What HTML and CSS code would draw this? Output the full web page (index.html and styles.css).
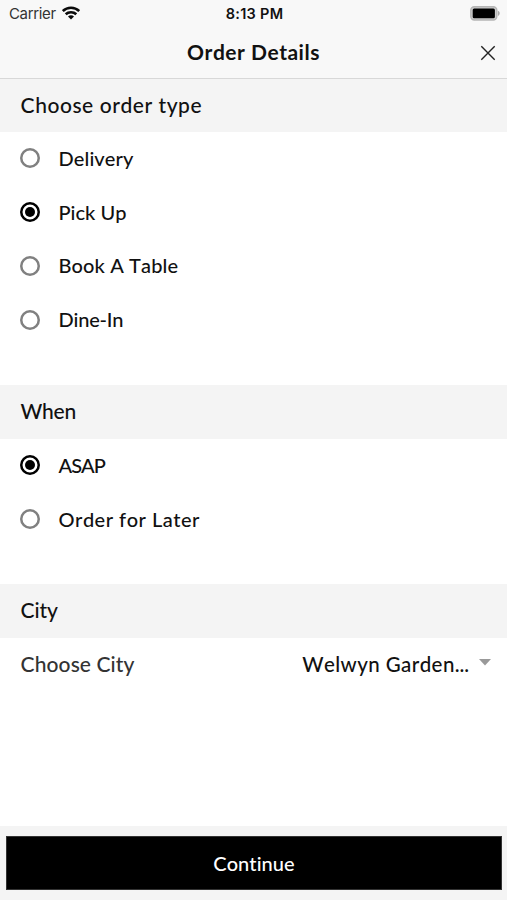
FILE: index.html
```html
<!DOCTYPE html>
<html lang="en">
<head>
<meta charset="utf-8">
<title>Order Details</title>
<link rel="stylesheet" href="styles.css">
</head>
<body>
<div class="screen">
  <header class="header">
    <div class="status">
      <div class="carrier"><span>Carrier</span>
        <svg class="wifi" width="18" height="14" viewBox="0 0 18 14"><g fill="none" stroke="#0b0b0b" stroke-width="2.6"><path d="M.8 5.100C5.300 .7 12.700 .7 17.200 5.100"/><path d="M3.700 8.300C6.600 5.500 11.400 5.500 14.300 8.300"/></g><path fill="#0b0b0b" d="M6 10.500C7.700 8.900 10.300 8.900 12 10.500L9 13.500Z"/></svg>
      </div>
      <span class="time">8:13 PM</span>
      <svg class="battery" width="32" height="15" viewBox="0 0 32 15"><rect x="1.800" y=".8" width="26" height="13.200" rx="3.500" fill="#ccc" stroke="#b5b5b5" stroke-width="1.400"/><rect x="3.700" y="2.500" width="22.200" height="9.800" rx="1.500"/><path d="M28.900 4.800C31.300 5.800 31.300 9 28.900 10Z" fill="#aaa"/></svg>
    </div>
    <div class="nav">
      <h1 class="title">Order Details</h1>
      <svg class="close" width="16" height="16" viewBox="0 0 16 16"><path d="M1.300 1.300L14.700 14.700M14.700 1.300L1.300 14.700" stroke="#222" stroke-width="1.400" fill="none"/></svg>
    </div>
  </header>
  <main class="content">
    <h2 class="section type-head"><span class="t-type">Choose order type</span></h2>
    <div class="options">
      <div class="option"><i class="radio"></i><span class="t-delivery">Delivery</span></div>
      <div class="option"><i class="radio on"></i><span class="t-pickup">Pick Up</span></div>
      <div class="option"><i class="radio"></i><span class="t-table">Book A Table</span></div>
      <div class="option"><i class="radio"></i><span class="t-dine">Dine-In</span></div>
    </div>
    <h2 class="section"><span class="t-when">When</span></h2>
    <div class="options later">
      <div class="option"><i class="radio on"></i><span class="t-asap">ASAP</span></div>
      <div class="option"><i class="radio"></i><span class="t-later">Order for Later</span></div>
    </div>
    <h2 class="section"><span class="t-city">City</span></h2>
    <div class="city">
      <span class="t-choose">Choose City</span>
      <span class="value">Welwyn Garden<span class="dots">...</span></span>
      <svg class="caret" width="12" height="7" viewBox="0 0 12 7"><path d="M0 0H12L6 6.500Z" fill="#999"/></svg>
    </div>
  </main>
  <footer class="footer"><button class="continue">Continue</button></footer>
</div>
</body>
</html>
```
FILE: styles.css
```css
* { box-sizing: border-box; }
body { margin: 0; background: #fff; color: #111; font: 500 20px/24px Lato, "Open Sans", sans-serif; font-kerning: none; font-variant-ligatures: none; }
.screen { width: 507px; height: 900px; display: flex; flex-direction: column; }
.header { height: 79px; background: #f8f8f8; border-bottom: 1px solid #d8d8d8; }
.status { height: 27px; padding: 0 7px 0 9px; display: grid; grid-template-columns: 1fr auto 1fr; align-items: center; font: 15px/27px Inter, sans-serif; }
.carrier { display: flex; align-items: center; gap: 6px; color: #333; letter-spacing: -.35px; }
.wifi { margin-bottom: 1px; }
.time { font-weight: 600; font-size: 14.5px; letter-spacing: .3px; }
.battery { justify-self: end; margin-right: -1px; }
.nav { height: 51px; display: grid; grid-template-columns: 1fr auto 1fr; align-items: center; padding: 0 11px 0 11px; }
.title { grid-column: 2; margin: 0; padding-bottom: 2px; font-size: 21px; line-height: 24px; font-weight: 700; letter-spacing: .5px; }
.close { justify-self: end; }
.section { margin: 0; height: 54px; padding: 0 20px 2px 20.600px; display: flex; align-items: center; background: #f4f4f4; font-size: 21px; font-weight: 500; }
.type-head { height: 53px; padding-bottom: 2px; }
.t-type { letter-spacing: .55px; }
.t-when { letter-spacing: -.3px; }
.t-city { letter-spacing: -.1px; }
.options { padding-bottom: 38px; }
.options.later { padding-bottom: 37.5px; }
.option { height: 53.75px; padding: 0 0 1px 20px; display: flex; align-items: center; gap: 18.500px; }
.option span { margin-bottom: 1px; }
.t-delivery { letter-spacing: .1px; }
.t-table { letter-spacing: .12px; }
.t-dine { letter-spacing: -.2px; }
.t-asap { letter-spacing: -1px; }
.t-later { letter-spacing: .5px; }
.radio { width: 20px; height: 20px; border-radius: 50%; box-shadow: inset 0 0 0 2.500px #808080; display: grid; place-items: center; }
.radio.on { box-shadow: inset 0 0 0 2.500px #000; }
.radio.on::after { content: ""; width: 10px; height: 10px; border-radius: 50%; background: #000; }
.city { height: 54px; padding: 0 16px 3px 20.600px; display: flex; align-items: center; color: #333; }
.t-choose { font-size: 21px; letter-spacing: .1px; }
.value { margin-left: auto; margin-right: 10px; color: #111; font-size: 20.500px; letter-spacing: .42px; }
.dots { letter-spacing: -.1px; }
.caret { margin-bottom: 2px; }
.footer { margin-top: auto; height: 74px; padding: 10px 5px 10px 6px; background: #f4f4f4; }
.continue { display: block; width: 100%; height: 54px; padding: 0 0 1px; border: 1px solid #333; background: #000; color: #fff; font: inherit; letter-spacing: .05px; }
```
